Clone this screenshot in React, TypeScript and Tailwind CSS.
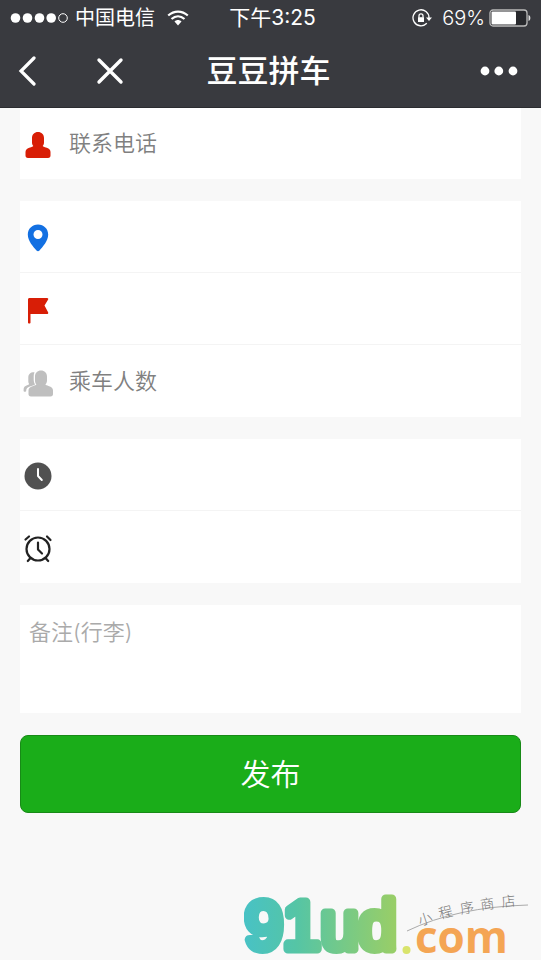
import React from "react";

// Icône utilisateur
function UserIcon() {
  return (
    <svg viewBox="0 0 30 30" className="h-[30px] w-[30px]" fill="#d81e06" aria-hidden="true">
      <path d="M15 2C11.500 2 9 4.500 9 8v4.500c0 1.600.5 2.600 1.300 3.400-.5.600-1.800 1-3.300 1.500C4 18.300 2.500 19.500 2.500 22v3.500C2.500 27 3.300 28 5 28h20c1.700 0 2.500-1 2.500-2.500V22c0-2.500-1.500-3.700-4.500-4.600-1.500-.5-2.800-.9-3.300-1.500.8-.8 1.300-1.800 1.300-3.400V8c0-3.500-2.500-6-6-6z" />
    </svg>
  );
}

// Repère de départ
function PinIcon() {
  return (
    <svg viewBox="0 0 30 30" className="h-[30px] w-[30px]" fill="#1370e2" aria-hidden="true">
      <path
        fillRule="evenodd"
        d="M15 .5C9.200.5 4.800 4.900 4.800 10.500c0 6.500 5.700 12.500 8.700 16 .9 1 2.100 1 3 0 3-3.500 8.700-9.500 8.700-16C25.200 4.900 20.800.5 15 .5zm0 5.500a4.500 4.500 0 1 1 0 9 4.500 4.500 0 0 1 0-9z"
      />
    </svg>
  );
}

// Drapeau d'arrivée
function FlagIcon() {
  return (
    <svg viewBox="0 0 30 30" className="h-[30px] w-[30px]" fill="#d81e06" aria-hidden="true">
      <path d="M6.500 2H24c1.200 0 1.600.9 1 1.800L21.500 9.500l3.600 6.700c.5 1-.1 1.800-1.100 1.800H7.500v8.500c0 .8-.4 1-1.200 1S5 27.300 5 26.500v-23C5 2.600 5.600 2 6.500 2z" />
    </svg>
  );
}

// Groupe de passagers
function GroupIcon() {
  return (
    <svg viewBox="0 0 30 30" className="h-[30px] w-[30px]" fill="#bfbfbf" aria-hidden="true">
      <path d="M18 2.500c-3.500 0-6 2.500-6 6v4c0 1.800.5 3 1.400 4-.5.700-1.800 1-3.200 1.400C7 18.800 5.500 20 5.500 22.500V26c0 1.600.8 2.500 2.500 2.500h19.500c1.700 0 2.500-.9 2.500-2.500v-3.500c0-2.500-1.500-3.700-4.500-4.600-1.500-.4-2.600-.7-3.100-1.400.9-1 1.600-2.200 1.600-4v-4c0-3.500-2.500-6-6-6z" />
      <path d="M11.500 4.200C7.500 4 5.300 6 5.300 9.500v3c0 1.500.2 2.700.8 3.500-.4.700-1 1-2 1.300C1.800 18 .6 19.300.6 21.500V23c0 1 2.600 1 2.600 0v-.5c0-2 1.300-3.400 3.600-4.100 2.200-.6 4.400-1 5.200-1.900-.9-1.400-1.300-2.900-1.300-4.400V8.500c0-1.700.2-3 .8-4.300z" />
    </svg>
  );
}

// Horloge pleine
function ClockIcon() {
  return (
    <svg viewBox="0 0 30 30" className="h-[30px] w-[30px]" aria-hidden="true">
      <circle cx="15" cy="14" r="13.500" fill="#515151" />
      <path d="M15 7v7l3.800 4" fill="none" stroke="#fff" strokeWidth="2" strokeLinecap="round" strokeLinejoin="round" />
    </svg>
  );
}

// Réveil
function AlarmIcon() {
  return (
    <svg
      viewBox="0 0 30 30"
      className="h-[30px] w-[30px]"
      fill="none"
      stroke="#222"
      strokeWidth="2.200"
      strokeLinecap="round"
      aria-hidden="true"
    >
      <circle cx="15" cy="15" r="11.500" />
      <path d="M15 8.500v7l4 4" strokeLinejoin="round" />
      <path d="M2.500 5.500 6 2.500M24 2.500l3.500 3.500M7.500 24l-2.700 3M22.500 24l2.700 3" />
    </svg>
  );
}

// Barre d'état du téléphone
function StatusBar() {
  return (
    <div className="grid h-[35px] grid-cols-[1fr_auto_1fr] items-center px-2.5 text-xl">
      <div className="flex items-center">
        <svg viewBox="0 0 58 12" className="h-3 w-[58px]" fill="#fff" aria-hidden="true">
          <circle cx="5.500" cy="6" r="4.800" />
          <circle cx="17.500" cy="6" r="4.800" />
          <circle cx="29.500" cy="6" r="4.800" />
          <circle cx="41.200" cy="6" r="4.800" />
          <circle cx="53" cy="6" r="4.300" fill="none" stroke="#fff" />
        </svg>
        <span className="ml-[7px]">中国电信</span>
        <svg viewBox="0 0 22 16" className="ml-3 h-4 w-[22px]" fill="none" stroke="#fff" strokeWidth="2.200" aria-hidden="true">
          <path d="M1.200 5.500C7 .2 15 .2 20.800 5.500" />
          <path d="M4.500 9c4-3.600 9-3.600 13 0" />
          <path d="M7.500 11.500c2-2 5-2 7 0L11 15.500z" fill="#fff" stroke="none" />
        </svg>
      </div>
      <span className="ml-1 text-[21px]">下午3:25</span>
      <div className="flex items-center justify-end">
        <svg viewBox="0 0 20 18" className="mr-2.5 h-[18px] w-5" fill="none" stroke="#fff" strokeWidth="1.300" aria-hidden="true">
          <path d="M14.800 14.300A8 8 0 1 1 17 9" />
          <path d="M14 8.500h6l-3 3.500z" fill="#fff" stroke="none" />
          <path d="M6 8.200h6v4.800H6z" fill="#fff" stroke="none" />
          <path d="M7 8.500V6.800a2 2 0 0 1 4 0v1.700" />
        </svg>
        <span className="font-light">69%</span>
        <svg viewBox="0 0 42 18" className="ml-1 h-[18px] w-[42px]" aria-hidden="true">
          <rect x="1" y="1" width="37" height="16" rx="3" fill="#28292d" stroke="#bbb" strokeWidth="1.300" />
          <rect x="2.500" y="2.500" width="24.500" height="13" rx="1" fill="#fff" />
          <path d="M39.500 6c2.500.5 2.500 5.500 0 6z" fill="#ddd" />
        </svg>
      </div>
    </div>
  );
}

// Barre de navigation
function NavBar() {
  return (
    <div className="grid h-[72px] grid-cols-[1fr_auto_1fr] items-center px-4">
      <div className="flex items-center gap-[58px]">
        <button type="button" aria-label="返回">
          <svg viewBox="0 0 22 30" className="h-[30px] w-[22px]" fill="none" stroke="#fff" strokeWidth="3.200" strokeLinecap="round">
            <path d="M18 2 5 15l13 13" />
          </svg>
        </button>
        <button type="button" aria-label="关闭">
          <svg viewBox="0 0 28 28" className="h-7 w-7" fill="none" stroke="#fff" strokeWidth="3.400" strokeLinecap="round">
            <path d="m3 3 22 22M25 3 3 25" />
          </svg>
        </button>
      </div>
      <h1 className="mr-1 text-[31px] leading-10 font-medium">豆豆拼车</h1>
      <button type="button" aria-label="更多" className="mr-[7px] justify-self-end">
        <svg viewBox="0 0 38 10" className="h-2.5 w-[38px]" fill="#fff">
          <circle cx="5" cy="5" r="4.400" />
          <circle cx="18.800" cy="5" r="4.400" />
          <circle cx="33" cy="5" r="4.400" />
        </svg>
      </button>
    </div>
  );
}

type FieldProps = {
  icon: React.ReactNode;
  label: string;
  type?: string;
  placeholder?: string;
};

// Ligne de formulaire : une icône et un champ
function Field({ icon, label, type = "text", placeholder }: FieldProps) {
  return (
    <label className="flex h-[72px] items-center px-[3px]">
      <span className="mt-1 shrink-0">{icon}</span>
      <input
        type={type}
        aria-label={label}
        placeholder={placeholder}
        className="ml-4 h-full min-w-0 flex-1 bg-transparent text-[22px] font-[350] outline-none placeholder:text-[#808080]"
      />
    </label>
  );
}

// Logo de la boutique
function ShopLogo() {
  return (
    <svg viewBox="0 -10 284 77" className="h-[77px] w-[284px]" role="img" aria-label="91ud.com 小程序商店">
      <defs>
        <linearGradient id="logo" gradientUnits="userSpaceOnUse" x1="0" y1="0" x2="150" y2="0">
          <stop offset="0" stopColor="#48c2c5" />
          <stop offset="0.350" stopColor="#55c5a5" />
          <stop offset="1" stopColor="#98ce68" />
        </linearGradient>
      </defs>
      <text
        x="1"
        y="56"
        fontSize="68"
        fontFamily="'Liberation Sans', sans-serif"
        fill="url(#logo)"
        stroke="url(#logo)"
        strokeWidth="9"
        strokeLinejoin="round"
      >
        91ud
      </text>
      <circle cx="162.500" cy="57" r="4" fill="#d9e46c" />
      <text x="171" y="60" fontSize="44" fontWeight="700" fontFamily="'Open Sans', sans-serif" fill="#f4a554">
        com
      </text>
      <path d="M163 38Q213 14 284 12" fill="none" stroke="#aaa" />
      <g fill="#777" fontSize="14" fontWeight="300" fontFamily="'Noto Sans CJK SC', sans-serif">
        <text transform="translate(176 33) rotate(-18)">小</text>
        <text transform="translate(196 26) rotate(-14)">程</text>
        <text transform="translate(217 21) rotate(-10)">序</text>
        <text transform="translate(237 17) rotate(-8)">商</text>
        <text transform="translate(258 14) rotate(-6)">店</text>
      </g>
    </svg>
  );
}

/**
 * Composant App
 * Formulaire de publication d'un covoiturage
 */
export default function App() {
  return (
    <div className="min-h-screen bg-[#f8f8f8] font-['Inter','Noto_Sans_CJK_SC',sans-serif]">
      {/* En-tête */}
      <header className="relative z-10 border-b border-[#2b2c30] bg-[#393a3f] text-white">
        <StatusBar />
        <NavBar />
      </header>

      <form className="-mt-px flex flex-col gap-[22px] px-5">
        {/* Contact */}
        <div className="bg-white">
          <Field icon={<UserIcon />} label="联系电话" type="tel" placeholder="联系电话" />
        </div>

        {/* Trajet et passagers */}
        <div className="divide-y divide-[#f4f4f4] bg-white">
          <Field icon={<PinIcon />} label="出发地" />
          <Field icon={<FlagIcon />} label="目的地" />
          <Field icon={<GroupIcon />} label="乘车人数" placeholder="乘车人数" />
        </div>

        {/* Date et heure */}
        <div className="divide-y divide-[#f4f4f4] bg-white">
          <Field icon={<ClockIcon />} label="出发日期" />
          <Field icon={<AlarmIcon />} label="出发时间" />
        </div>

        {/* Remarques */}
        <textarea
          aria-label="备注"
          placeholder="备注(行李)"
          className="block h-[108px] w-full resize-none bg-white px-[9px] py-[11px] text-[22px] leading-8 font-[350] outline-none placeholder:text-[#aaa]"
        />

        <button
          type="submit"
          className="h-[78px] rounded-lg border border-[#188a17] bg-[#1aad19] text-[30px] font-[350] text-white"
        >
          发布
        </button>
      </form>

      {/* Pied de page */}
      <footer className="mt-[70px] flex justify-end pr-[13px]">
        <ShopLogo />
      </footer>
    </div>
  );
}
